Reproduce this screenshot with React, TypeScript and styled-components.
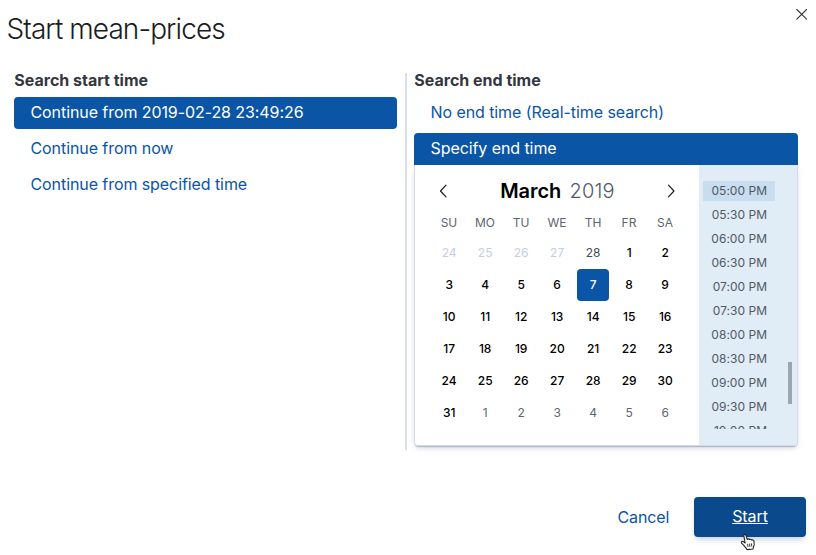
import React from "react";
import styled, { createGlobalStyle } from "styled-components";

const PRIMARY = "#0a55a6";

const GlobalStyle = createGlobalStyle`
  *, *::before, *::after { box-sizing: border-box; }
  body {
    margin: 0;
    background: #fff;
    font-family: Inter, "Liberation Sans", sans-serif;
    font-size: 16px;
    overflow: hidden;
  }
  button { font-family: inherit; border: 0; background: none; padding: 0; margin: 0; }
`;

const Modal = styled.div`
  width: 816px;
  height: 555px;
  display: flex;
  flex-direction: column;
`;

const Header = styled.header`
  height: 73px;
  display: flex;
  justify-content: space-between;
  padding: 9px 9px 0 6.5px;
`;

const Title = styled.h1`
  margin: 0;
  font-size: 28px;
  line-height: 41px;
  font-weight: 300;
  letter-spacing: -0.92px;
  color: #1a1c21;
  white-space: nowrap;
`;

const CloseButton = styled.button`
  width: 11px;
  height: 11px;
  svg { display: block; }
`;

const Body = styled.main`
  height: 377px;
  display: flex;
  padding: 0 18px 0 14px;
`;

const StartColumn = styled.section`
  width: 393px;
  padding-right: 8px;
  border-right: 2px solid #d9dfea;
`;

const EndColumn = styled.section`
  width: 384px;
  margin-left: 7px;
`;

const ColumnTitle = styled.h2`
  margin: 0;
  height: 24px;
  padding-left: 0.3px;
  line-height: 15px;
  font-size: 16px;
  font-weight: 700;
  letter-spacing: 0;
  color: #343741;
  white-space: nowrap;
`;

const OptionList = styled.div`
  display: flex;
  flex-direction: column;
  gap: 4px;
`;

const Option = styled.button<{ $selected?: boolean; $attached?: boolean }>`
  display: block;
  width: 100%;
  height: 32px;
  padding: 0 16px 2px 16.5px;
  text-align: left;
  font-size: 16px;
  letter-spacing: -0.08px;
  white-space: nowrap;
  color: ${(p) => (p.$selected ? "#fff" : PRIMARY)};
  background: ${(p) => (p.$selected ? PRIMARY : "transparent")};
  border-radius: ${(p) => (p.$attached ? "4px 4px 0 0" : "4px")};
`;

const Picker = styled.div`
  height: 281px;
  display: flex;
  border: 1px solid #d3dae6;
  border-top: 0;
  border-radius: 0 0 4px 4px;
  box-shadow: 0 2px 1px -1px rgba(152, 162, 189, 0.7), 0 3px 6px -2px rgba(152, 162, 189, 0.6);
`;

const Calendar = styled.div`
  width: 284px;
  padding: 10px 16px 0;
`;

const MonthBar = styled.div`
  height: 32px;
  display: flex;
  justify-content: space-between;
  align-items: center;
`;

const NavButton = styled.button`
  width: 24px;
  height: 24px;
  display: flex;
  align-items: center;
  justify-content: center;
`;

const MonthLabel = styled.div`
  display: flex;
  gap: 8.5px;
  font-size: 20px;
  line-height: 32px;
`;

const Month = styled.span`
  font-weight: 600;
  padding-left: 0.8px;
  letter-spacing: -0.1px;
  color: #000;
`;

const Year = styled.span`
  font-weight: 300;
  letter-spacing: 0.1px;
  color: #535966;
`;

const WeekGrid = styled.div<{ $labels?: boolean }>`
  display: grid;
  grid-template-columns: repeat(7, 36px);
  grid-auto-rows: ${(p) => (p.$labels ? "30px" : "32px")};
  justify-items: center;
`;

const WeekLabel = styled.span`
  font-size: 12px;
  line-height: 31px;
  color: #5c6370;
`;

type DayKind = "disabled" | "outside" | "current" | "normal" | "selected";

const dayColors: Record<DayKind, string> = {
  disabled: "#c3cee0",
  outside: "#5f6673",
  current: "#474c58",
  normal: "#000",
  selected: "#fff",
};

const DayCell = styled.span<{ $kind: DayKind }>`
  width: 32px;
  height: 32px;
  line-height: 32px;
  text-align: center;
  font-size: 12px;
  border-radius: 4px;
  padding-left: 0.3px;
  font-weight: ${(p) => (p.$kind === "normal" || p.$kind === "selected" ? 500 : 400)};
  color: ${(p) => dayColors[p.$kind]};
  background: ${(p) => (p.$kind === "selected" ? PRIMARY : "transparent")};
`;

const TimePane = styled.div`
  flex: 1;
  display: flex;
  justify-content: space-between;
  padding: 16px 5px 0 4px;
  background: #e0ecf6;
  border-radius: 0 0 3px 0;
`;

const TimeList = styled.div`
  width: 72px;
  height: 248px;
  display: flex;
  flex-direction: column;
  gap: 4px;
  overflow: hidden;
`;

const TimeItem = styled.div<{ $selected?: boolean }>`
  flex: 0 0 20px;
  line-height: 20px;
  padding-right: 8px;
  text-align: right;
  font-size: 12px;
  letter-spacing: 0.02px;
  color: #515864;
  white-space: nowrap;
  background: ${(p) => (p.$selected ? "#c8ddef" : "transparent")};
`;

const ScrollThumb = styled.div`
  width: 4px;
  height: 42px;
  margin-top: 181px;
  background: #9aa6b4;
`;

const Footer = styled.footer`
  display: flex;
  justify-content: flex-end;
  gap: 24.6px;
  padding: 47px 10px 0;
`;

const CancelButton = styled.button`
  height: 40px;
  color: ${PRIMARY};
  font-size: 16px;
  letter-spacing: -0.08px;
`;

const StartButton = styled.button`
  position: relative;
  width: 112px;
  height: 40px;
  padding-bottom: 2px;
  border-radius: 4px;
  background: #0a4a8c;
  color: #fff;
  font-size: 16px;
  letter-spacing: -0.08px;
  text-decoration: underline;
  box-shadow: 0 4px 6px -2px rgba(40, 80, 140, 0.3);
`;

const Pointer = styled.svg`
  position: absolute;
  left: 45.5px;
  top: 35.5px;
  overflow: visible;
`;

const WEEKDAYS = ["SU", "MO", "TU", "WE", "TH", "FR", "SA"];

const DAYS: { day: number; kind: DayKind }[] = [
  ...[24, 25, 26, 27].map((day) => ({ day, kind: "disabled" as DayKind })),
  { day: 28, kind: "current" },
  ...Array.from({ length: 31 }, (_, i) => ({
    day: i + 1,
    kind: (i === 6 ? "selected" : "normal") as DayKind,
  })),
  ...[1, 2, 3, 4, 5, 6].map((day) => ({ day, kind: "outside" as DayKind })),
];

const TIMES = [
  "05:00 PM", "05:30 PM", "06:00 PM", "06:30 PM", "07:00 PM", "07:30 PM",
  "08:00 PM", "08:30 PM", "09:00 PM", "09:30 PM", "10:00 PM",
];

function Chevron({ d }: { d: string }) {
  return (
    <svg width="8" height="14" viewBox="0 0 8 14" fill="none" stroke="#1a1c21" strokeWidth="1.2" strokeLinecap="round" strokeLinejoin="round">
      <path d={d} />
    </svg>
  );
}

export default function App() {
  return (
    <>
      <GlobalStyle />
      <Modal>
        <Header>
          <Title>Start mean-prices</Title>
          <CloseButton aria-label="Close">
            <svg width="11" height="11" viewBox="0 0 11 11" stroke="#343741" strokeWidth="1.1" strokeLinecap="round">
              <path d="M0.8 0.5L10.6 10.2M10.6 0.5L0.8 10.2" />
            </svg>
          </CloseButton>
        </Header>
        <Body>
          <StartColumn>
            <ColumnTitle>Search start time</ColumnTitle>
            <OptionList>
              <Option $selected>Continue from 2019-02-28 23:49:26</Option>
              <Option>Continue from now</Option>
              <Option>Continue from specified time</Option>
            </OptionList>
          </StartColumn>
          <EndColumn>
            <ColumnTitle>Search end time</ColumnTitle>
            <OptionList>
              <Option>No end time (Real-time search)</Option>
              <Option $selected $attached>Specify end time</Option>
            </OptionList>
            <Picker>
              <Calendar>
                <MonthBar>
                  <NavButton aria-label="Previous month"><Chevron d="M7 1.2L1.5 7L7 12.8" /></NavButton>
                  <MonthLabel><Month>March</Month><Year>2019</Year></MonthLabel>
                  <NavButton aria-label="Next month"><Chevron d="M1.5 1.2L7 7L1.5 12.8" /></NavButton>
                </MonthBar>
                <WeekGrid $labels>
                  {WEEKDAYS.map((d) => <WeekLabel key={d}>{d}</WeekLabel>)}
                </WeekGrid>
                <WeekGrid>
                  {DAYS.map((d, i) => <DayCell key={i} $kind={d.kind}>{d.day}</DayCell>)}
                </WeekGrid>
              </Calendar>
              <TimePane>
                <TimeList>
                  {TIMES.map((t, i) => <TimeItem key={t} $selected={i === 0}>{t}</TimeItem>)}
                </TimeList>
                <ScrollThumb />
              </TimePane>
            </Picker>
          </EndColumn>
        </Body>
        <Footer>
          <CancelButton>Cancel</CancelButton>
          <StartButton>
            Start
            <Pointer width="17" height="18" viewBox="0 0 17 18">
              <path
                d="M5.2 10L3.9 3.1C3.5 1.1 5.5 0.7 6 2.4L7.3 6.5C8 5.5 9.2 5.7 9.5 6.6C10.3 5.9 11.4 6.2 11.7 7.1C12.7 6.5 13.8 7.2 14 8.3C14.4 10.8 14.5 12.7 13.4 14.2L13.1 16L7 16.6C6.3 14.5 4.6 13.8 3.3 11.8L1.6 10.1C0.8 8.8 2 7.9 3.2 8.6Z"
                fill="#fff" stroke="#222" strokeWidth="1.1" strokeLinejoin="round"
              />
              <path d="M7.6 10.8L8 14M9.5 10.6L9.9 13.8M11.4 10.4L11.8 13.6" fill="none" stroke="#222" strokeWidth="0.9" />
            </Pointer>
          </StartButton>
        </Footer>
      </Modal>
    </>
  );
}
